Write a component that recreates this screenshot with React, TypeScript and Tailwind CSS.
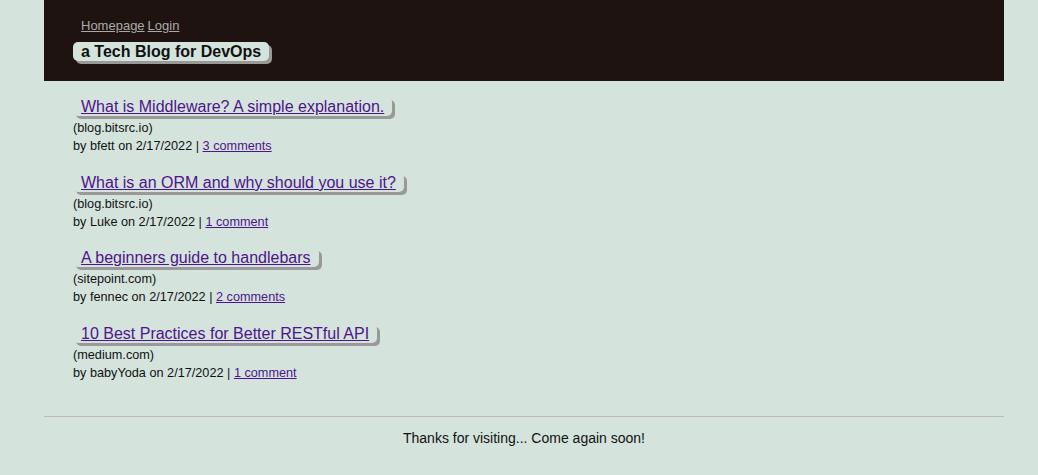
const posts = [
  { title: "What is Middleware? A simple explanation.", site: "blog.bitsrc.io", by: "bfett", comments: "3 comments" },
  { title: "What is an ORM and why should you use it?", site: "blog.bitsrc.io", by: "Luke", comments: "1 comment" },
  { title: "A beginners guide to handlebars", site: "sitepoint.com", by: "fennec", comments: "2 comments" },
  { title: "10 Best Practices for Better RESTful API", site: "medium.com", by: "babyYoda", comments: "1 comment" },
];

export default function App() {
  return (
    <div className="min-h-[475px] bg-[#d4e4dd] font-['Liberation_Sans',Arial,sans-serif] text-[#111]">
      <div className="ml-[44px] w-[960px]">
        {/* header */}
        <header className="bg-[#1e1311] h-[81px] pl-[29px] pt-[18px]">
          <nav className="pl-[8px] text-[13px] leading-[16px] text-[#aaa] flex gap-[3px]">
            <a href="#" className="underline">Homepage</a>
            <a href="#" className="underline">Login</a>
          </nav>
          <h1 className="mt-[8px] inline-block bg-[#d4e4dd] text-[#111] font-bold text-[16px] leading-[19px] px-[8px] rounded-[5px] shadow-[3px_3px_0_#999]">
            a Tech Blog for DevOps
          </h1>
        </header>

        {/* posts */}
        <main className="pl-[29px] pt-[14px] pb-[34px] flex flex-col gap-[15.5px]">
          {posts.map((p) => (
            <div key={p.title}>
              <a
                href="#"
                className="inline-block px-[8px] text-[16px] leading-[19px] text-[#4f138b] underline rounded-[5px] shadow-[3px_3px_0_#999]"
              >
                {p.title}
              </a>
              <div className="text-[12.7px] leading-[18px]">({p.site})</div>
              <div className="text-[12.7px] leading-[18px]">
                by {p.by} on 2/17/2022 | <a href="#" className="underline text-[#4f138b]">{p.comments}</a>
              </div>
            </div>
          ))}
        </main>

        {/* footer */}
        <footer className="border-t border-[#bbb] pt-[12px] text-center text-[14px] leading-[18px]">
          Thanks for visiting... Come again soon!
        </footer>
      </div>
    </div>
  );
}
